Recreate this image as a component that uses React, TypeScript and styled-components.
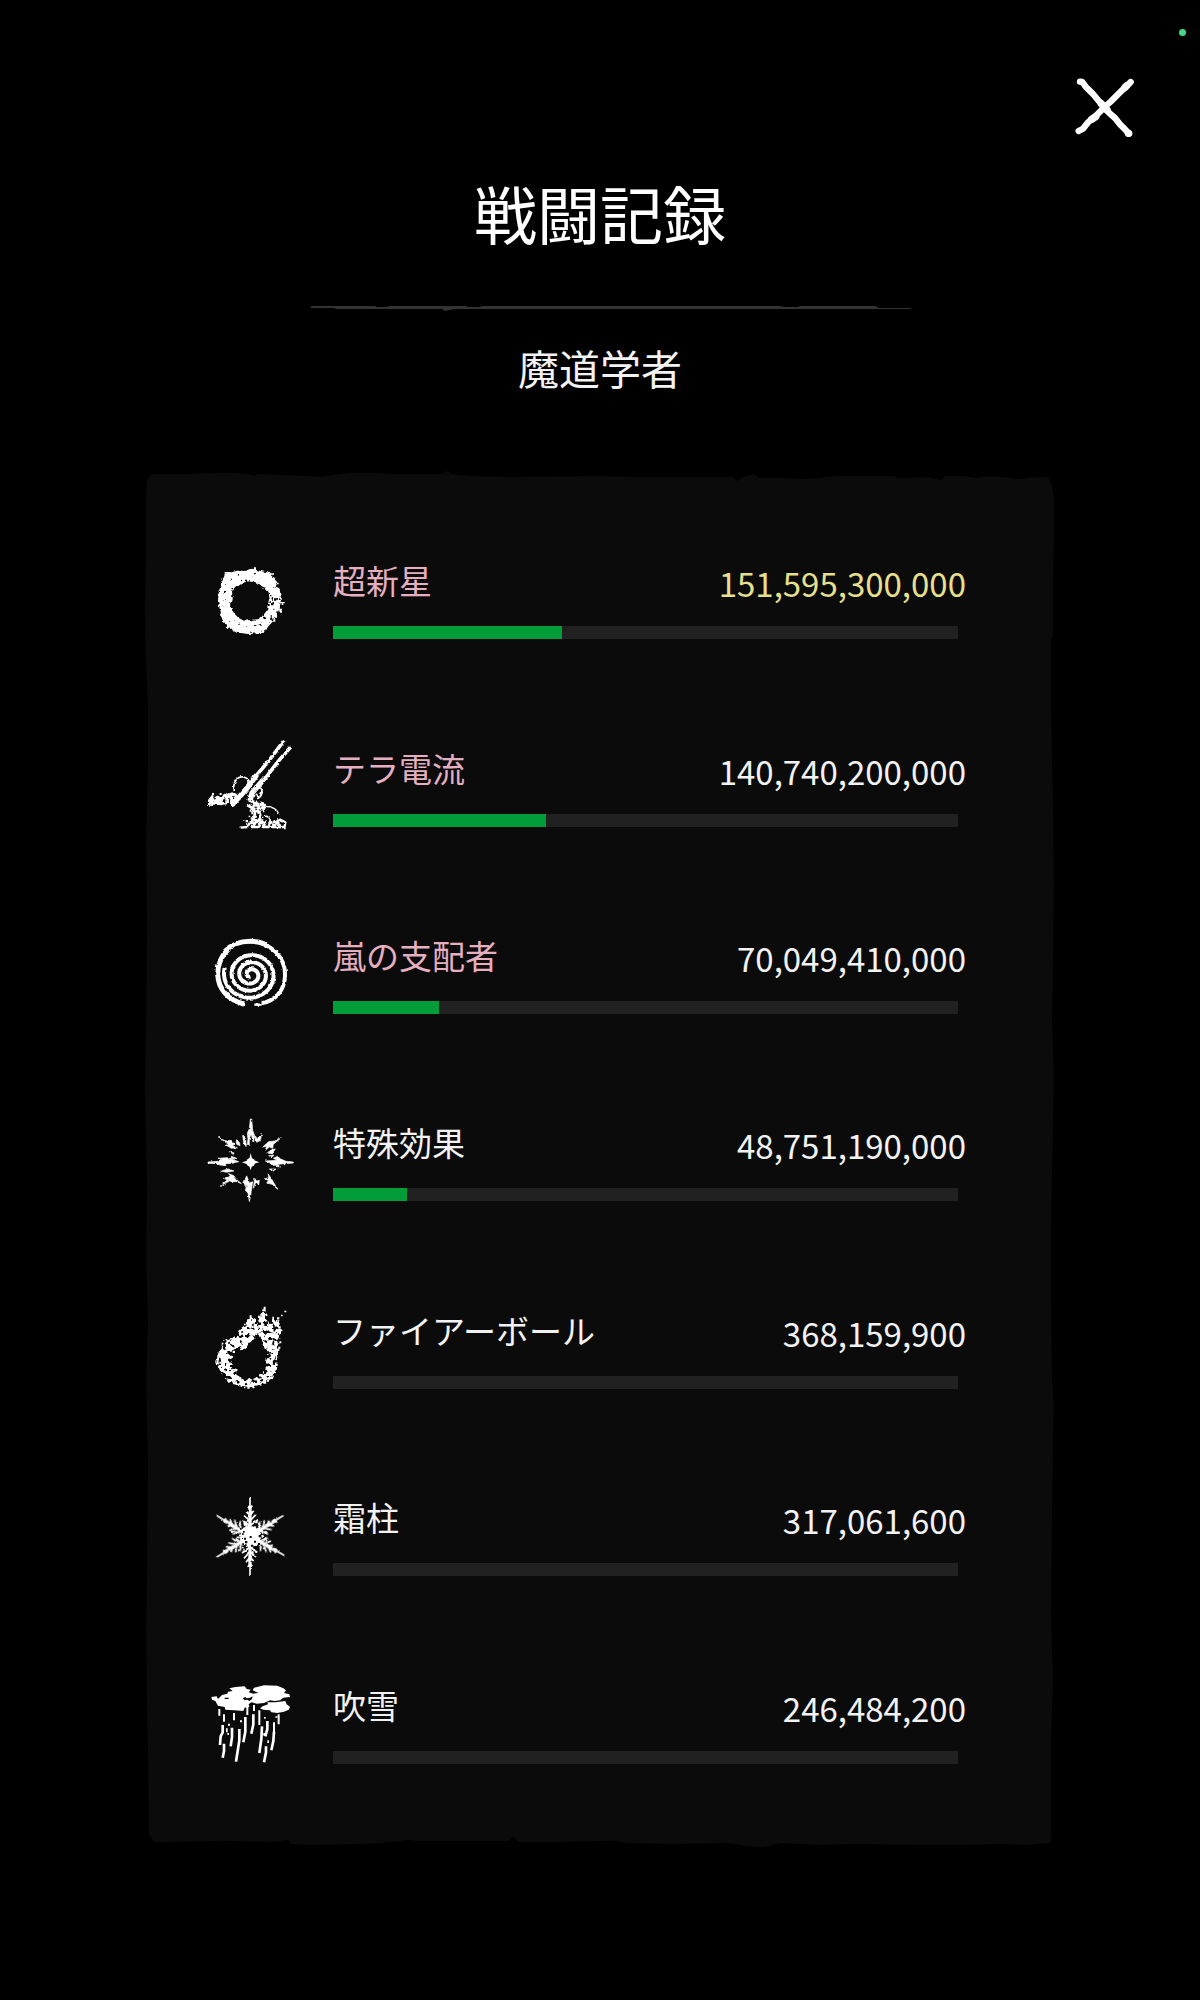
import React from "react";
import styled, { createGlobalStyle } from "styled-components";

const GlobalStyle = createGlobalStyle`
  *, *::before, *::after { box-sizing: border-box; }
  html, body { margin: 0; background: #000; }
  body {
    font-family: "Noto Sans CJK JP", "Noto Sans", sans-serif;
    color: #f2f2f2;
  }
`;

const Page = styled.main`
  display: flex;
  flex-direction: column;
  align-items: center;
  min-height: 100vh;
  padding: 29px 14px 120px;
  background: #000;
`;

const StatusBar = styled.div`
  display: flex;
  justify-content: flex-end;
  align-self: stretch;
`;

const StatusDot = styled.span`
  width: 7px;
  height: 7px;
  border-radius: 50%;
  background: #45d987;
`;

const Toolbar = styled.div`
  display: flex;
  justify-content: flex-end;
  align-self: stretch;
  padding: 32px 41px 0 0;
`;

const CloseButton = styled.button`
  display: block;
  width: 80px;
  height: 80px;
  padding: 0;
  border: 0;
  background: none;
  cursor: pointer;

  svg { display: block; width: 80px; height: 80px; }
`;

const Title = styled.h1`
  margin: 20px 0 0;
  font-size: 63px;
  line-height: 88px;
  font-weight: 400;
  color: #fff;
`;

const Rule = styled.svg`
  display: block;
  width: 600px;
  max-width: 100%;
  height: 8px;
  margin: 48px 0 0 22px;
`;

const Subtitle = styled.h2`
  margin: 27px 0 0;
  font-size: 41px;
  line-height: 56px;
  font-weight: 400;
`;

type Edge = [string, string];

const along = (points: [number, number][], map: (p: number, d: number) => Edge) =>
  points.map(([p, d]) => map(p, d).join(" "));

const tornTop: [number, number][] = [
  [0.2, 10], [0.5, 5], [0.8, 3], [5, 3], [8, 2], [10, 2], [12, 4], [12.1, 5], [12.3, 3], [15, 4], [18, 5],
  [19.5, 6], [20.5, 4], [22.5, 2], [25, 2], [27, 3], [32.6, 3], [33.2, 0], [33.6, 3], [36, 5],
  [40, 6], [50, 5], [54, 6], [64.6, 6], [65, 10], [66, 5], [67, 3], [67.4, 7], [70, 7], [73, 8],
  [76, 5], [82, 5], [83, 7], [86, 6], [87.5, 9], [88, 5], [90, 5], [91, 7], [93, 5], [96, 8],
  [98, 6], [99.2, 6], [99.6, 12],
];
const tornRight: [number, number][] = [
  [2, 1], [5, 1], [8, 2], [12, 2], [12.2, 4], [17, 4], [21, 3], [24, 2], [30, 1], [36, 2],
  [40, 3], [44, 1], [51, 3], [55, 4], [60, 4], [66, 3], [68, 1], [70, 2], [76, 3], [83, 4],
  [88, 2], [92, 4], [99, 4],
];
const tornBottom: [number, number][] = [
  [99.5, 5], [98, 4], [97, 3], [94, 4], [90, 3], [85, 3], [78, 4], [74, 3], [70, 5], [68, 1],
  [66, 2], [64, 5], [58, 4], [53, 5], [51, 8], [51, 7], [45, 6], [41, 6], [40.5, 11], [40, 7],
  [30, 7], [29, 8], [26, 5], [24, 4], [18, 3], [16, 4], [15.8, 8], [14, 6], [9, 7], [2, 6],
  [1, 6],
];
const tornLeft: [number, number][] = [
  [99, 4], [93, 3], [90, 2], [84, 1], [80, 2], [72, 3], [66, 1], [62, 3], [57, 1], [52, 2],
  [45, 0], [40, 1], [33, 2], [27, 1], [21, 3], [17, 3], [14, 1], [10, 0], [6, 1], [2, 1],
];

const tornEdges = [
  ...along(tornTop, (p, d) => [`${p}%`, `${d}px`]),
  ...along(tornRight, (p, d) => [`calc(100% - ${d}px)`, `${p}%`]),
  ...along(tornBottom, (p, d) => [`${p}%`, `calc(100% - ${d}px)`]),
  ...along(tornLeft, (p, d) => [`${d}px`, `${p}%`]),
].join(", ");

const Panel = styled.section`
  width: 100%;
  max-width: 910px;
  margin-top: 76px;
  padding: 34px 97px 31px 45px;
  background: #0b0b0b;
  clip-path: polygon(${tornEdges});
`;

const RecordList = styled.ul`
  display: grid;
  grid-auto-rows: 1fr;
  min-height: 1312px;
  margin: 0;
  padding: 0;
  list-style: none;
`;

const Record = styled.li`
  display: flex;
  align-items: center;
  gap: 23px;
`;

const SkillIcon = styled.svg`
  flex: none;
  width: 120px;
  height: 120px;
  fill: #fff;
`;

const Details = styled.div`
  flex: 1;
  min-width: 0;
`;

const Heading = styled.div`
  display: flex;
  justify-content: space-between;
  height: 50px;
  margin: 0 -8px 18px 0;
  font-size: 33px;
`;

const SkillName = styled.span<{ $rare: boolean }>`
  line-height: 44px;
  color: ${(p) => (p.$rare ? "#e5afc0" : "#f2f2f2")};
`;

const Damage = styled.span<{ $best: boolean }>`
  line-height: 50px;
  color: ${(p) => (p.$best ? "#e6df8c" : "#f2f2f2")};
`;

const Track = styled.div`
  height: 13px;
  background: #212121;
`;

const Fill = styled.div`
  height: 13px;
  background: #029c39;
`;

/* Chalk textures shared by all of the drawings. */
const Textures = styled.svg`
  position: absolute;
  width: 0;
  height: 0;
`;

const Chalk = ({ id, freq, scale, seed, cover }: { id: string; freq: number; scale: number; seed: number; cover: number }) => (
  <filter id={id} x="-10%" y="-10%" width="120%" height="120%" colorInterpolationFilters="sRGB">
    <feTurbulence type="fractalNoise" baseFrequency={freq} numOctaves={2} seed={seed} result="noise" />
    <feDisplacementMap in="SourceGraphic" in2="noise" scale={scale} xChannelSelector="R" yChannelSelector="G" result="rough" />
    <feColorMatrix in="noise" type="matrix" values={`0 0 0 0 1  0 0 0 0 1  0 0 0 0 1  0 0 0 14 ${cover}`} result="holes" />
    <feComposite in="rough" in2="holes" operator="in" />
  </filter>
);

/* Deterministic specks scattered inside a box. */
const specks = (seed: number, n: number, x: number, y: number, w: number, h: number, test?: (x: number, y: number) => boolean) => {
  let s = seed;
  const next = () => {
    s = (s * 16807) % 2147483647;
    return s / 2147483647;
  };
  let d = "";
  for (let i = 0; i < n; i++) {
    const px = Math.round(x + next() * w);
    const py = Math.round(y + next() * h);
    const size = 3 + Math.round(next() * 4);
    if (!test || test(px, py)) d += `M${px} ${py}h${size}v${size}h-${size}z`;
  }
  return d;
};

const ringSpecks = specks(71, 260, 78, 82, 214, 212, (x, y) => {
  const r = Math.hypot(x - 180, y - 186);
  return r > 90 && r < 98 && x + y > 300;
});

const Ring = () => (
  <g transform="translate(-2 -3)">
    <path
      filter="url(#chalk-soft)"
      fillRule="evenodd"
      d="M106 108L130 102L143 98L170 98L188 92L210 98L240 104L256 120L262 140L272 158L275 188L270 214L256 244L238 264L222 284L180 288L142 284L114 268L98 242L92 215L86 190L88 162L96 134Z
      M144 144L128 160L130 185L124 205L134 226L148 240L164 248L204 244L224 234L232 214L242 190L238 166L222 148L205 134L180 130L160 134Z"
    />
    <path d={ringSpecks} />
    <path d="M106 102h18v5h-18zM232 106h22v4h-22zM194 88h6v8h-6zM272 192h14v4h-14zM268 212h10v5h-10z" />
    <path fill="#0b0b0b" d={specks(27, 14, 232, 160, 34, 90)} />
  </g>
);

const Beam = () => (
  <g transform="translate(0 -3)">
    <g filter="url(#chalk-line)" fill="none" stroke="#fff" strokeLinejoin="round">
      <path d="M282 47L236 108L196 155" strokeWidth="11" />
      <path d="M200 150L172 188L146 218L124 240" strokeWidth="16" />
      <path d="M302 66L262 112L226 160L196 188" strokeWidth="11" />
      <path d="M220 164L186 204L180 228" strokeWidth="16" />
      <path d="M133 198C126 172 142 154 160 156C176 158 178 174 170 186" strokeWidth="5" />
      <path d="M202 190C216 184 220 200 212 212C206 222 198 216 200 206" strokeWidth="6" />
      <path d="M58 242V226L66 216V236L82 232V216L96 222L92 236L110 234V212L126 206L124 230L140 226L136 206L118 216L104 210L88 236L72 224L58 232" strokeWidth="8" />
      <path d="M176 226L196 232L188 250L172 240M196 228L208 248L196 262L186 254M210 232L224 240L216 256M196 262L190 284L206 288L214 266L202 258" strokeWidth="8" />
      <path d="M226 244C244 244 264 252 266 270M222 274C236 272 246 284 238 296" strokeWidth="4" />
      <path d="M152 308L172 306L180 292L196 294L188 306L204 306L212 290L226 294L218 306L236 306L240 290L256 298L246 306H284L286 292L270 284L256 292L272 302" strokeWidth="7" />
    </g>
    <path d={specks(19, 26, 60, 204, 76, 36)} />
    <path d={specks(43, 44, 176, 226, 44, 70)} />
    <path d={specks(8, 22, 160, 284, 116, 20)} />
  </g>
);

const spiral = (to: number, phase: number, r0: number, grow: number) => {
  const pts: string[] = [];
  for (let a = 0; a <= to; a += 0.14) {
    const r = r0 + grow * a;
    pts.push(`${(181 + r * Math.cos(a + phase)).toFixed(1)} ${(178 + r * 0.93 * Math.sin(a + phase)).toFixed(1)}`);
  }
  return `M${pts.join("L")}`;
};

const Spiral = () => (
  <g filter="url(#chalk-solid)" fill="none" stroke="#fff" transform="translate(1 4)">
    <path d={spiral(20.6, 1.7, 6, 3.65)} strokeWidth="12" />
    <path d="M162 266C112 254 84 220 82 178C82 142 98 116 116 100" strokeWidth="15" />
    <path d="M104 108C124 86 150 78 180 78C198 78 214 82 228 88" strokeWidth="15" />
    <path d="M222 88C262 104 286 140 284 182C282 226 256 256 214 264" strokeWidth="12" />
    <path d="M192 268H214" strokeWidth="7" />
  </g>
);

const Star = () => (
  <>
    <path d="M182 156L187 176L208 184L187 190L182 208L177 192L156 184L177 178Z" />
    <circle cx="182" cy="184" r="13" />
    <g filter="url(#chalk-solid)" stroke="#fff" strokeWidth="2">
      <path d="M181 54L185 54L188 88L194 104L190 126L186 112L182 100L178 114L178 134L172 132L174 112L172 96L178 84Z" />
      <path d="M158 104L166 112L170 136L162 130ZM194 108L204 112L214 100L212 118L200 124Z" />
      <path d="M178 302L174 276L166 268L170 254L164 242L170 224L178 246L188 242L184 270L182 284ZM160 240L168 230L166 256ZM190 262L194 232L200 240L208 238L206 252L198 242Z" />
      <path d="M54 183L82 181L98 173L84 172L112 170L130 176L146 182L128 187L106 188L108 194L90 192L80 188L54 187Z" />
      <path d="M310 183L288 181L272 174L262 166L250 172L262 178L226 180L244 188L254 196L272 198L262 190L286 188L310 186Z" />
      <path d="M85 108L106 120L118 118L134 128L128 134L142 140L124 142L108 132L118 132ZM138 116L148 124L150 134L140 130Z" />
      <path d="M274 110L250 130L248 142L238 138L226 148L230 136L218 138L236 122L254 120Z" />
      <path d="M90 256L112 236L100 232L120 226L116 218L132 224L138 234L154 248L140 242L128 242L118 240Z" />
      <path d="M266 268L246 250L230 246L236 238L222 234L236 230L234 218L246 236L254 250Z" />
      <path d="M118 152L134 156L130 160ZM92 210L116 204L132 210L110 214ZM230 156L246 146L256 144L246 158ZM236 164L252 162L246 168ZM238 204L258 204L250 210ZM124 166L140 172L124 174Z" />
    </g>
  </>
);

const insideFlame = (x: number, y: number) => {
  const body = Math.hypot(x - 174, (y - 216) * 1.1);
  const inBody = body < 90 && body > 66 && y > 180;
  const tail = y < 190 && y > 84 && x > 110 && x < 272 && x + y > 270 && x - y < 160 && !(x > 190 - (y - 146) && x < 230 && y > 142);
  const lick = y < 116 && x > 226 && x < 244;
  return (inBody || tail) && !lick;
};

const Fireball = () => (
  <g transform="translate(-3 0)">
    <path
      filter="url(#chalk-grain)"
      fillRule="evenodd"
      d="M226 58L218 82L194 92L172 90L172 108L152 124L148 138L114 156L98 172L86 200L82 224L92 250L110 272L140 290L182 298L222 288L250 266L264 240L268 206L264 180L272 152L278 128L268 98L248 96L238 110L232 84Z
      M206 138L220 156L226 180L238 200L230 222L234 246L206 264L184 276L150 270L142 250L126 236L132 212L118 196L134 182L162 184L186 164Z"
    />
    <path d={specks(33, 300, 82, 62, 194, 236, insideFlame)} />
    <path d="M286 68h6v5h-6zM276 80h5v5h-5zM264 88h7v6h-7zM224 56h6v14h-6zM182 82h6v12h-6zM250 86h5v12h-5zM98 164h5v5h-5z" />
  </g>
);

const Frost = () => {
  const arms = [0, 58, 119, 180, 238, 302];
  return (
    <>
      {arms.map((angle, i) => (
        <g key={angle} transform={`translate(180 181) rotate(${angle})`}>
          <g filter="url(#chalk-solid)" fill="none" stroke="#fff">
            <path d="M0 0V-92" strokeWidth="10" />
            <path d="M0 -60V-116" strokeWidth="5" />
            <path d="M0 -62L12 -78M0 -62L-11 -74M0 -46L18 -66M0 -46L-18 -62M0 -32L24 -50M0 -32L-22 -48M0 -84L7 -92M0 -82L-7 -90" strokeWidth="5" />
          </g>
          <path d={specks(11 + i * 7, 14, -20, -58, 38, 36)} />
        </g>
      ))}
      <circle cx="180" cy="181" r="32" filter="url(#chalk-soft)" />
      <path fill="#0b0b0b" d={specks(57, 20, 146, 148, 68, 66)} />
    </>
  );
};

const Blizzard = () => (
  <g transform="translate(0 6)">
    <path d="M64 96L80 94L84 102L96 90L112 86L114 80L128 78L118 70L136 66L164 64L170 72L182 74L176 82L190 86L206 84L188 76L192 68L222 61L262 62L280 70L288 76L282 84L298 88L300 96L280 98L270 106L254 108L240 106L222 114L200 116L184 112L176 118L178 126L164 128L160 138L134 136L106 134L104 126L84 122L76 108L66 104Z" />
    <path d="M218 124L234 118L232 112L256 112L286 108L290 118L300 126L296 134L282 140L262 144L244 142L240 136L220 134L210 130Z" />
    <path fill="#0b0b0b" d="M158 100L166 96L170 100L180 98L188 94L186 102L178 108L172 104L164 106ZM104 98h12v4h-12z" />
    <path
      fill="none"
      stroke="#fff"
      strokeWidth="6"
      d="M88 132V152M102 148V170M132 144V166M172 122V150M192 120V138M208 136V180M266 148V178M252 172V206"
    />
    <path
      fill="none"
      stroke="#fff"
      strokeWidth="8"
      d="M98 180V202L92 214L90 240M126 188V216L122 244M148 192V226L144 252L138 290M166 156V200L160 232M190 148V178L184 206M232 168V192L226 214M216 184L214 222L208 264M252 200L250 228L244 256M102 236V258L98 278M228 244V262L222 292"
    />
    <path d="M114 176h6v6h-6zM108 190h5v12h-5zM150 166h6v6h-6zM222 156h5v5h-5zM256 154h6v4h-6zM232 226h5v8h-5zM112 204h5v6h-5zM220 204h5v8h-5z" />
  </g>
);

interface Skill {
  name: string;
  damage: number;
  rare: boolean;
  Drawing: () => React.ReactElement;
}

const skills: Skill[] = [
  { name: "超新星", damage: 151595300000, rare: true, Drawing: Ring },
  { name: "テラ電流", damage: 140740200000, rare: true, Drawing: Beam },
  { name: "嵐の支配者", damage: 70049410000, rare: true, Drawing: Spiral },
  { name: "特殊効果", damage: 48751190000, rare: false, Drawing: Star },
  { name: "ファイアーボール", damage: 368159900, rare: false, Drawing: Fireball },
  { name: "霜柱", damage: 317061600, rare: false, Drawing: Frost },
  { name: "吹雪", damage: 246484200, rare: false, Drawing: Blizzard },
];

const total = skills.reduce((sum, s) => sum + s.damage, 0);
const best = Math.max(...skills.map((s) => s.damage));

export default function App() {
  return (
    <Page>
      <GlobalStyle />
      <Textures aria-hidden="true">
        <Chalk id="chalk-soft" freq={0.09} scale={14} seed={4} cover={-3.2} />
        <Chalk id="chalk-line" freq={0.1} scale={9} seed={9} cover={-2.6} />
        <Chalk id="chalk-solid" freq={0.1} scale={8} seed={9} cover={-1} />
        <Chalk id="chalk-grain" freq={0.08} scale={18} seed={2} cover={-5.4} />
      </Textures>
      <StatusBar>
        <StatusDot />
      </StatusBar>
      <Toolbar>
        <CloseButton type="button" aria-label="閉じる">
          <svg viewBox="0 0 240 240" fill="none" stroke="#fff" strokeLinecap="round" strokeLinejoin="round" aria-hidden="true">
            <path strokeWidth="19" d="M45 41L52 42L62 56L84 78L104 102L118 118L134 136L150 150L166 170L180 184L192 197" />
            <path strokeWidth="19" d="M197 42L184 56L172 66L154 84L136 102L118 118L104 132L86 150L70 162L54 182L41 189" />
            <path strokeWidth="22" d="M108 106L126 126M80 154L92 146M190 196L191 196M180 58L184 54" />
          </svg>
        </CloseButton>
      </Toolbar>
      <Title>戦闘記録</Title>
      <Rule viewBox="0 0 600 8" preserveAspectRatio="none" fill="#333" aria-hidden="true">
        <path d="M0 2H64L66 3H76L78 2H154L158 3H168L172 2H468L474 3H486L490 2H564L568 4H600V5H144L134 7L131 5H26L22 4H0Z" />
      </Rule>
      <Subtitle>魔道学者</Subtitle>
      <Panel>
        <RecordList>
          {skills.map(({ name, damage, rare, Drawing }) => {
            const share = Math.floor((damage / total) * 1000) / 10;
            return (
              <Record key={name}>
                <SkillIcon viewBox="0 0 360 360" aria-hidden="true">
                  <Drawing />
                </SkillIcon>
                <Details>
                  <Heading>
                    <SkillName $rare={rare}>{name}</SkillName>
                    <Damage $best={damage === best}>{damage.toLocaleString("en-US")}</Damage>
                  </Heading>
                  <Track role="meter" aria-label={name} aria-valuemin={0} aria-valuemax={100} aria-valuenow={share}>
                    <Fill style={{ width: `${share}%` }} />
                  </Track>
                </Details>
              </Record>
            );
          })}
        </RecordList>
      </Panel>
    </Page>
  );
}
